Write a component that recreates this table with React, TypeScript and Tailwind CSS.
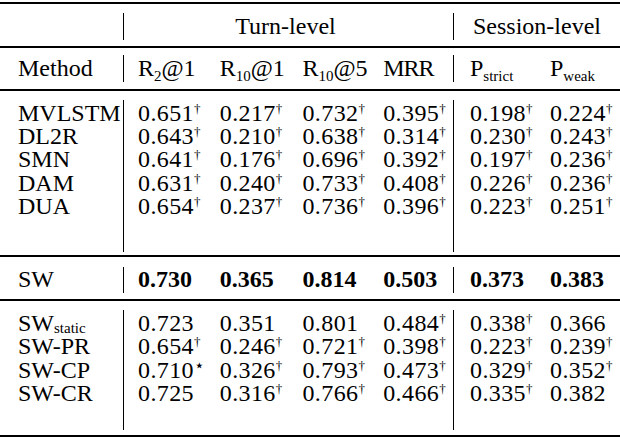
import React from "react"

type Row = { name: React.ReactNode; vals: string[] }

const block1: Row[] = [
  { name: "MVLSTM", vals: ["0.651†", "0.217†", "0.732†", "0.395†", "0.198†", "0.224†"] },
  { name: "DL2R", vals: ["0.643†", "0.210†", "0.638†", "0.314†", "0.230†", "0.243†"] },
  { name: "SMN", vals: ["0.641†", "0.176†", "0.696†", "0.392†", "0.197†", "0.236†"] },
  { name: "DAM", vals: ["0.631†", "0.240†", "0.733†", "0.408†", "0.226†", "0.236†"] },
  { name: "DUA", vals: ["0.654†", "0.237†", "0.736†", "0.396†", "0.223†", "0.251†"] },
]

const block3: Row[] = [
  {
    name: (
      <>
        SW<span className="text-[15px] leading-[12px] relative top-[4px]">static</span>
      </>
    ),
    vals: ["0.723", "0.351", "0.801", "0.484†", "0.338†", "0.366"],
  },
  { name: "SW-PR", vals: ["0.654†", "0.246†", "0.721†", "0.398†", "0.223†", "0.239†"] },
  { name: "SW-CP", vals: ["0.710⋆", "0.326†", "0.793†", "0.473†", "0.329†", "0.352†"] },
  { name: "SW-CR", vals: ["0.725", "0.316†", "0.766†", "0.466†", "0.335†", "0.382"] },
]

const turnW = ["w-[82px]", "w-[83px]", "w-[81px]", "w-[70px]"]
const sessW = ["w-[80px]", "w-[70px]"]

function Val({ s }: { s: string }) {
  const mark = s.endsWith("†") || s.endsWith("⋆") ? s.slice(-1) : ""
  const num = mark ? s.slice(0, -1) : s
  return (
    <span className="whitespace-nowrap">
      <span className="tracking-[0.4px]">{num}</span>
      {mark && (
        <span
          className={
            mark === "†"
              ? "text-[13px] leading-[10px] relative top-[-8px]"
              : "text-[17px] leading-[10px] relative top-[-7px]"
          }
        >
          {mark}
        </span>
      )}
    </span>
  )
}

// one table line: method cell | four turn cells | two session cells
function Line({ name, cells, h }: { name?: React.ReactNode; cells?: React.ReactNode[]; h: string }) {
  return (
    <div className={`flex items-center ${h}`}>
      <div className="w-[124px] h-full flex items-center pl-[18px] border-r-[1.5px] border-black whitespace-nowrap">{name}</div>
      <div className="w-[330px] h-full flex items-center pl-[14px] border-r-[1.5px] border-black">
        {cells &&
          cells.slice(0, 4).map((c, i) => (
            <div key={i} className={turnW[i]}>
              {c}
            </div>
          ))}
      </div>
      <div className="flex-1 h-full flex items-center pl-[16px]">
        {cells &&
          cells.slice(4).map((c, i) => (
            <div key={i} className={sessW[i]}>
              {c}
            </div>
          ))}
      </div>
    </div>
  )
}

function Sub({ base, sub }: { base: string; sub: string }) {
  return (
    <span className="whitespace-nowrap">
      {base}
      <span className="text-[15px] leading-[12px] relative top-[5px]">{sub}</span>
    </span>
  )
}

export default function App() {
  return (
    <div className="w-[620px] h-[438px] bg-white text-black text-[24px] leading-[21px] overflow-hidden font-['Liberation_Serif','Times_New_Roman',serif]">
      <div className="h-[2px]" />
      <div className="h-[2px] bg-black" />

      {/* group header */}
      <div className="pt-[9px] pb-[6px]">
        <div className="flex items-center h-[27px]">
          <div className="w-[124px] h-full border-r-[1.5px] border-black" />
          <div className="w-[330px] h-full flex items-center justify-center border-r-[1.5px] border-black pr-[6px]">Turn-level</div>
          <div className="flex-1 h-full flex items-center justify-center">Session-level</div>
        </div>
      </div>
      <div className="h-[2px] bg-black" />

      {/* column header */}
      <div className="pt-[7px] pb-[7px]">
        <Line
          h="h-[27px]"
          name="Method"
          cells={[
            <span>R<span className="text-[15px] leading-[12px] relative top-[5px]">2</span>@1</span>,
            <span>R<span className="text-[15px] leading-[12px] relative top-[5px]">10</span>@1</span>,
            <span>R<span className="text-[15px] leading-[12px] relative top-[5px]">10</span>@5</span>,
            <span className="tracking-[-1px]">MRR</span>,
            <Sub base="P" sub="strict" />,
            <Sub base="P" sub="weak" />,
          ]}
        />
      </div>
      <div className="h-[2px] bg-black" />

      {/* baselines */}
      <div className="pt-[9px] pb-[3px]">
        <Line h="h-[1.5px]" />
        {block1.map((r, i) => (
          <Line key={i} h="h-[23.3px]" name={r.name} cells={r.vals.map((v) => <Val s={v} />)} />
        ))}
        <Line h="h-[34px]" />
      </div>
      <div className="h-[2px] bg-black" />

      {/* ours */}
      <div className="pt-[10px] pb-[6px]">
        <Line
          h="h-[26px]"
          name="SW"
          cells={["0.730", "0.365", "0.814", "0.503", "0.373", "0.383"].map((v) => (
            <span className="font-bold">{v}</span>
          ))}
        />
      </div>
      <div className="h-[2px] bg-black" />

      {/* ablations */}
      <div className="pt-[9px] pb-[5px]">
        <Line h="h-[2.3px]" />
        {block3.map((r, i) => (
          <Line key={i} h="h-[23.1px]" name={r.name} cells={r.vals.map((v) => <Val s={v} />)} />
        ))}
        <Line h="h-[25px]" />
      </div>
      <div className="h-[2px] bg-black" />
    </div>
  )
}
